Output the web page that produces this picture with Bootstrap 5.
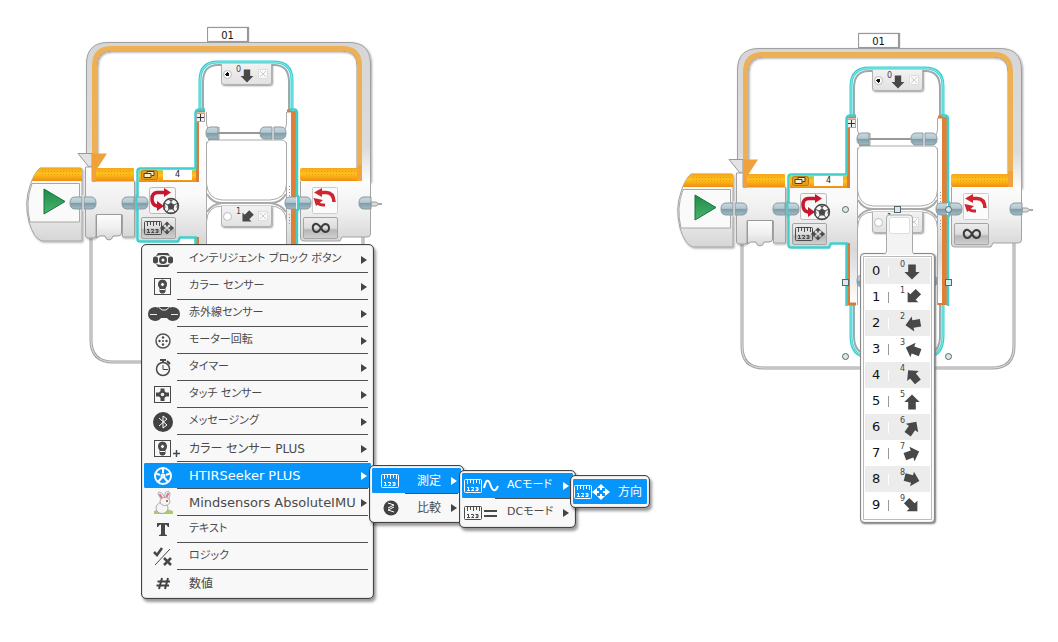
<!DOCTYPE html>
<html lang="ja">
<head>
<meta charset="utf-8">
<meta name="viewport" content="width=device-width, initial-scale=1">
<title>HTIRSeeker PLUS</title>
<link href="https://cdn.jsdelivr.net/npm/bootstrap@5.3.0/dist/css/bootstrap.min.css" rel="stylesheet">
<style>
  body { background: #fff; color: #4a4a4a; font-family: "DejaVu Sans", "Noto Sans CJK JP", sans-serif; font-size: 12px; }
  .workspace { display: grid; grid-template-columns: 8fr 5fr; min-height: 100vh; overflow: hidden; }
  .board { position: relative; }
  .board-low { top: 6px; }
  .board > svg { display: block; width: 407px; height: 380px; overflow: visible; }
  .pin { position: absolute; }
  .board button { font: inherit; color: inherit; }

  .loop-name { left: 207px; top: 27px; width: 41px; height: 15px; border: 1px solid #999; background: #fff; text-align: center; font-size: 10px; line-height: 12px; color: #111; padding: 2px 0 0; box-shadow: 1px 0 1px #999, inset 0 0 1px #aaa; }
  .port { left: 163px; top: 170px; width: 29px; height: 10px; border: 0; background: #fff; text-align: center; font-size: 8px; line-height: 10px; padding: 0; color: #222; }
  .case-tab { left: 221px; width: 51px; height: 21px; border: 1px solid #b2b2b2; border-top: 0; background: linear-gradient(#f2f2f2, #e2e2e2); box-shadow: 1px 1px 2px #999; border-radius: 0 0 3px 3px; padding: 0 3px 0 1px; }
  .case-one { top: 64px; }
  .case-two { top: 206px; }
  .case-tab input { appearance: none; width: 9px; height: 9px; margin: 0; border: 1px solid #bbb; border-radius: 50%; background: #fff; }
  .case-tab input:checked { background: radial-gradient(#111 0 2px, #fff 2px); }
  .case-tab svg { width: 21px; height: 20px; }
  .btn-x { width: 10px; height: 10px; border: 1px solid #ddd; background: #fafafa; padding: 0; line-height: 0; }
  .case-tab .btn-x svg { width: 8px; height: 8px; display: block; }
  .mode { width: 35px; height: 22px; padding: 0; border: 1px solid #a5a5a5; border-radius: 2px; background: linear-gradient(#ececec, #dcdcdc 50%, #b7b7b7 60%, #cfcfcf); line-height: 0; }
  .mode svg { width: 33px; height: 20px; display: block; }
  .mode-switch { left: 141px; top: 217px; }
  .mode-loop { left: 303px; top: 217px; }
  .expand { left: 196px; top: 113px; width: 9px; height: 9px; padding: 0; border: 1px solid #aaa; background: #eee; line-height: 0; }
  .expand svg { width: 7px; height: 7px; display: block; }

  .flyout { position: absolute; background: #f8f8f8; border: 1px solid #444; border-radius: 5px; box-shadow: inset 0 0 1px #444, 2px 3px 3px rgba(0,0,0,.4); padding: 1px 2px; font-feature-settings: "palt"; }
  .entry { position: relative; display: flex; align-items: center; width: 100%; height: 27px; padding: 0 4px 0 0; border: 0; background: none; text-align: left; white-space: nowrap; line-height: 20px; }
  .entry > svg { flex: none; width: 38px; height: 24px; }
  .entry > span { flex: 1; padding-left: 7px; }
  .entry > .kana { font-size: 11px; }
  .entry > .latin { font-size: 13px; }
  .entry::after { content: ""; position: absolute; left: 33px; right: 3px; bottom: 0; border-bottom: 1px solid #505050; }
  .entry:last-child::after { display: none; }
  .entry.more::before { content: ""; order: 3; border: solid transparent; border-width: 4px 0 4px 6px; border-left-color: #444; }
  .board .entry.chosen { color: #fff; }
  .entry.chosen { background: linear-gradient(#0795fb, #0795fb) 0 1px / 100% 25px no-repeat; border-radius: 3px; }
  .entry.chosen.more::before { border-left-color: #fff; }
  .menu-main { left: 141px; top: 244px; width: 233px; }
  .menu-measure { left: 369px; top: 465px; width: 95px; }
  .menu-wave { left: 459px; top: 470px; width: 117px; }
  .menu-direction { left: 570px; top: 475px; width: 80px; padding: 2px; }

  .picker { left: 209px; top: 247px; width: 75px; padding: 4px; border: 1px solid #888; border-radius: 4px; background: #fff; box-shadow: 1px 1px 2px #777, inset 0 0 1px #888, inset 0 0 0 2px #fff, inset 0 0 0 3px #bbb; }
  .picker button { width: 100%; height: 26px; display: flex; align-items: center; border: 0; padding: 0 0 0 7px; background: #fff; font-size: 13px; color: #111; }
  .picker button:nth-child(odd) { background: #ececec; }
  .picker button > i { width: 1px; height: 11px; margin: 0 7px 0 8px; background: #999; }
  .picker button:nth-child(odd) > i { background: #fff; }
  .picker svg { width: 28px; height: 24px; }
</style>
</head>
<body>
<svg width="0" height="0" class="position-absolute" aria-hidden="true">
  <defs>
    <linearGradient id="gold" x2="0" y2="1"><stop offset="0" stop-color="#f5a51c"/><stop offset=".45" stop-color="#ffc21a"/><stop offset="1" stop-color="#f08c14"/></linearGradient>
    <linearGradient id="shell" x2="0" y2="1"><stop offset="0" stop-color="#fdfdfd"/><stop offset=".5" stop-color="#f0f0f0"/><stop offset="1" stop-color="#d6d6d6"/></linearGradient>
    <linearGradient id="wall" gradientUnits="userSpaceOnUse" x1="0" y1="110" x2="0" y2="299"><stop offset="0" stop-color="#fff"/><stop offset=".45" stop-color="#fafafa"/><stop offset=".7" stop-color="#d8d8d8"/><stop offset="1" stop-color="#fff"/></linearGradient>
    <linearGradient id="band" gradientUnits="userSpaceOnUse" x1="0" y1="42" x2="0" y2="182"><stop offset="0" stop-color="#d6d6d6"/><stop offset=".75" stop-color="#dcdcdc"/><stop offset="1" stop-color="#fcfcfc"/></linearGradient>
    <linearGradient id="steel" x2="0" y2="1"><stop offset="0" stop-color="#c8d9e0"/><stop offset=".45" stop-color="#b4c8d0"/><stop offset=".5" stop-color="#7e9ba7"/><stop offset="1" stop-color="#a3bac3"/></linearGradient>
    <linearGradient id="leaf" x2="0" y2="1"><stop offset="0" stop-color="#1d8c48"/><stop offset="1" stop-color="#4bb36c"/></linearGradient>
    <pattern id="studs" width="3" height="3" patternUnits="userSpaceOnUse"><rect width="1" height="1" fill="#e99a10"/></pattern>
    <filter id="drop" x="-10%" y="-10%" width="125%" height="125%"><feDropShadow dx="1" dy="1" stdDeviation="1" flood-opacity=".35"/></filter>

    <g id="plug-l"><path d="M12 0H5Q0 0 0 6T5 12H12Z" fill="url(#steel)" stroke="#89999f"/></g>
    <g id="plug-r"><path d="M0 0H7Q12 0 12 6T7 12H0Z" fill="url(#steel)" stroke="#89999f"/></g>
    <path id="arrow" d="M-4-8H4V0H8L0 8L-8 0H-4Z" fill="#484848"/>
    <g id="ruler" fill="none" stroke="currentColor"><rect x=".5" y=".5" width="17" height="13" rx="1"/><path d="M3.500 1V5M6.500 1V4M9.500 1V5M12.500 1V4M15.500 1V5M4.500 8V12M3 8.500H4.500M3 11.500H6M7 8.500H9.500V10L7.500 11.500H10M11.500 8.500H14V11.500H11.500M12 10H14"/></g>
    <g id="move" stroke="currentColor" fill="currentColor"><path d="M-6 0H-2M2 0H6M0-6V-2M0 2V6" stroke-width="2"/><path d="M-9 0L-4-4V4ZM9 0L4-4V4ZM0-8L-4-4H4ZM0 8L-4 4H4Z" stroke="none"/></g>
    <g id="ball" fill="none" stroke="currentColor"><circle r="7.500" fill="#f4f4f4" stroke-width="1.400"/><path d="M0-3L3-1L2 3H-2L-3-1Z" fill="currentColor"/><path d="M0-3V-7M3-1L7-3M2 3L4.500 6.500M-2 3L-4.500 6.500M-3-1L-7-3"/><path d="M-3-7L0-5L3-7M7-3L6 1L7 4M-7-3L-6 1L-7 4M-3 7H3"/></g>
    <g id="bulb" fill="none" stroke="currentColor"><rect x="8.500" y="3.500" width="16" height="16"/><path d="M12.500 9Q12.500 5 16.500 5T20.500 9Q20.500 12 19 13V17L17.500 18H15.500L14 17V13Q12.500 12 12.500 9Z" fill="currentColor"/><circle cx="16.500" cy="9.500" r="2" fill="#f8f8f8"/><path d="M14 14.500H19" stroke="#f8f8f8"/></g>

    <g id="program">
      <!-- loop frame -->
      <path d="M91 238V340Q91 362 113 362H341Q363 362 363 340V236" fill="none" stroke="#a2a2a2" stroke-width="3"/>
      <path d="M91 238V340Q91 362 113 362H341Q363 362 363 340V236" fill="none" stroke="#e4e4e4"/>
      <path d="M86.500 154V64Q86.500 42.500 108 42.500H349Q370.500 42.500 370.500 64V182H357V66Q357 51 342 51H112Q97 51 97 66V154Z" fill="url(#band)" stroke="#a0a0a0" filter="url(#drop)"/>
      <path d="M94.500 176V66Q94.500 48.500 112 48.500H342Q359.500 48.500 359.500 66V176" fill="none" stroke="#edb055" stroke-width="5"/>
      <path d="M78 153.500H92V167H89Z" fill="#e2e2e2" stroke="#999"/>
      <path d="M92 153.500H107L97 169H92Z" fill="#efa23c"/>

      <!-- start block -->
      <path d="M40 168H80Q82 168 82 170V241H42Q34 239 29 222Q24 202 30 186Q34 173 40 168Z" fill="url(#shell)" stroke="#a3a3a3" filter="url(#drop)"/>
      <path d="M41 168H82V181H32Q35 171 41 168Z" fill="url(#gold)"/><rect x="40" y="170" width="39" height="7" fill="url(#studs)"/>
      <path d="M32 183.500H79.500V222H30Q25 202 32 183.500Z" fill="#fafafa" stroke="#a8a8a8"/>
      <path d="M44 189L65 201.500L44 214Z" fill="url(#leaf)" stroke="#16743a"/>
      <!-- loop entry -->
      <path d="M85.500 167H92V181H134.500V237H122.500V215H96V236L94 238H87L85.500 236Z" fill="url(#shell)" stroke="#a3a3a3" filter="url(#drop)"/>
      <rect x="94" y="168" width="40" height="13" rx="1" fill="url(#gold)"/><rect x="97" y="170" width="34" height="7" fill="url(#studs)"/>
      <path d="M92 165V182H96V165Z" fill="#f0a13b"/>
      <path d="M96.500 214.500H121.500V233Q121.500 236 118 236H113Q112 240 109 240T105 236H100L96.500 238Z" fill="url(#shell)" stroke="#999"/>

      <!-- switch: both case lanes -->
      <path d="M200 112V80Q200 62 218 62H274Q292 62 292 80V112V330Q292 351 274 351H218Q200 351 200 330Z" fill="#fff" stroke="#39cfd2" stroke-width="3"/>
      <path d="M200 112V80Q200 62 218 62H274Q292 62 292 80V112M292 299V330Q292 351 274 351H218Q200 351 200 330V299" fill="none" stroke="#8ce9e8"/>
      <path d="M203 112V82Q203 65 218 65H274Q289 65 289 82V112M203 296V330Q203 348 218 348H274Q289 348 289 330V296" fill="none" stroke="#9aabad" stroke-width="2"/>
      <path d="M139 181H197V112Q198 110 201 110H204Q206 110 206.500 114V299H197V237H180L178 241H139Z" fill="url(#wall)"/>
      <path d="M287 299V113Q287 110 291 110H294Q297 110 297 113V299Z" fill="url(#wall)"/>
      <path d="M206.500 112V124Q207 129 211 133M206.500 299V142M286.500 299V142M286.500 112V124Q286 129 283 131" stroke="#aaa" fill="none"/>
      <rect x="139" y="170" width="59" height="12" fill="url(#gold)"/>
      <path d="M197.500 122V182M197.500 237V298H205M197 112.500Q197 111 200 111H205M287 111H292" fill="none" stroke="#d97c36" stroke-width="3"/>
      <rect x="291" y="111" width="5" height="188" fill="#df8036"/><path d="M287 298H296" stroke="#d97c36" stroke-width="2"/>
      <path d="M289.500 186V196M289.500 214V224" stroke="#999" stroke-dasharray="1 2"/>
      <path d="M205 109.500H199Q195.500 110 195.500 113V168.500H140Q137.500 168.500 137.500 171V239Q137.500 241.500 140 241.500H178L180 237.500H195.500V300M290 109.500H294Q297 109.500 297 113V300" fill="none" stroke="#3fd0cd" stroke-width="2.500"/>
      <path d="M139 170.500H195" stroke="#9edb75"/>
      <rect x="141.500" y="170.500" width="16" height="9" rx="2" fill="#e8a016" stroke="#b97b14"/>
      <path d="M144 173.500H151V177.500H144ZM147 173V171.500H154V175.500H151.500" fill="#f6ecce" stroke="#4f3c14"/>
      <rect x="149.500" y="187.500" width="26" height="26" rx="2" fill="#f7f7f7" stroke="#bbb"/>
      <path d="M165 192.500H157Q152 193 152 199T157 206H160" fill="none" stroke="#c7172e" stroke-width="3.500"/><path d="M164 188L171 192.500L164 197ZM157 201L164 206L157 211Z" fill="#c7172e"/>
      <use href="#ball" transform="translate(171 206)" color="#484848"/>

      <!-- wires between cases -->
      <path d="M218 133H262" stroke="#999" stroke-width="2"/>
      <path d="M206.500 299V222Q207 206 222 206H270Q286 206 286.500 222V299" fill="#fff" stroke="#aaa"/>
      <path d="M206.500 145Q207 140 211 140H281Q286.500 140 286.500 145V184Q286 199 270 200H222Q208 199 206.500 184Z" fill="#fff" stroke="#aaa"/>
      <path d="M207 194Q212 203 222 203H270Q281 203 286 194M207 212Q212 204 222 203M286 212Q281 204 270 203" fill="none" stroke="#aaa" stroke-width="2"/>
      <use href="#plug-l" x="206" y="127"/><path d="M208 139.500H219V127" stroke="#999" fill="none"/>
      <use href="#plug-l" x="260" y="127"/><use href="#plug-r" x="274" y="127"/>
      <use href="#plug-l" x="206" y="269"/><use href="#plug-r" x="274" y="269"/>

      <!-- loop end -->
      <path d="M300.500 181H370.500V234Q370.500 237 367 237H342L340 241H304Q300.500 241 300.500 238Z" fill="url(#shell)"/>
      <path d="M370.500 176V234Q370.500 237 367 237H342L340 241H304Q300.500 241 300.500 238V181" fill="none" stroke="#a3a3a3"/>
      <rect x="300" y="168" width="61" height="13" rx="2" fill="url(#gold)"/><rect x="304" y="170" width="54" height="7" fill="url(#studs)"/><path d="M357 165H362V181H357Z" fill="#f1a33a"/>
      <rect x="312.500" y="187.500" width="25" height="26" rx="1" fill="#fbfbfb" stroke="#ccc"/>
      <path d="M321 192.500H326Q333.500 192.500 334 202" fill="none" stroke="#d02531" stroke-width="3.500"/><path d="M314 192.500L322 188V197ZM313.500 198L323 200L316 206Z" fill="#d02531"/><path d="M317 202Q319 205.500 325 205" fill="none" stroke="#d02531" stroke-width="3"/>

      <use href="#plug-l" x="70" y="197"/><use href="#plug-r" x="84" y="197"/>
      <use href="#plug-l" x="122" y="197"/><use href="#plug-r" x="136" y="197"/>
      <use href="#plug-l" x="285" y="197"/><use href="#plug-r" x="299" y="197"/>
      <path d="M136.500 195V211M298 195V211" stroke="#3fd0cd" stroke-width="2"/><path d="M83 195V211M296.500 197V209" stroke="#e7eef0"/>
      <path d="M371 202H376L379 204L376 206H371Z" fill="#ddd" stroke="#999"/><path d="M378 204H382" stroke="#aaa" stroke-width="2"/>
      <use href="#plug-l" x="359" y="197"/>
    </g>
  </defs>
</svg>

<template id="controls">
  <input class="pin loop-name" type="text" value="01" aria-label="ループ">
  <input class="pin port" type="text" value="4" aria-label="ポート">
  <button class="pin expand" type="button" aria-label="+"><svg viewBox="0 0 7 7"><path d="M0 3.500H7M3.500 0V7" stroke="#333"/></svg></button>
  <div class="pin case-tab case-one d-flex align-items-center justify-content-between">
    <input type="radio" checked aria-label="0"><svg viewBox="0 0 21 20"><text x="1" y="8" font-size="8" fill="#444">0</text><use href="#arrow" transform="translate(12 12) scale(.8)"/></svg><button class="btn-x" type="button" aria-label="×"><svg viewBox="0 0 8 8"><path d="M1 1L7 7M7 1L1 7" stroke="#ccc"/></svg></button>
  </div>
  <div class="pin case-tab case-two d-flex align-items-center justify-content-between">
    <input type="radio" aria-label="1"><svg viewBox="0 0 21 20"><text x="1" y="8" font-size="8" fill="#444">1</text><use href="#arrow" transform="translate(12 11) rotate(45) scale(.8)"/></svg><button class="btn-x" type="button" aria-label="×"><svg viewBox="0 0 8 8"><path d="M1 1L7 7M7 1L1 7" stroke="#ccc"/></svg></button>
  </div>
  <button class="pin mode mode-switch" type="button" aria-label="測定"><svg viewBox="0 0 33 20"><use href="#ruler" x="2" y="3"/><use href="#move" transform="translate(25 10) scale(.8)"/></svg></button>
  <button class="pin mode mode-loop" type="button" aria-label="無限"><svg viewBox="0 0 33 20"><path d="M17 10Q13.500 5 11 6Q8 7.500 9 11Q10 14.500 13 14Q15 13.500 17 10Q19 6 21.500 6Q25 6.500 25 10T21.500 14Q19 14 17 10" fill="none" stroke="#3c3c3c" stroke-width="2"/></svg></button>
</template>

<main class="workspace">
  <section class="board">
    <svg viewBox="0 0 407 380" aria-hidden="true"><use href="#program"/></svg>

    <nav class="flyout menu-main">
      <button class="entry more" type="button"><svg viewBox="0 0 38 24"><g fill="#484848"><path d="M14 5H24L26 8Q19 6 12 8ZM14 19H24L26 16Q19 18 12 16Z"/><rect x="9" y="8.500" width="5" height="7" rx="2"/><rect x="24" y="8.500" width="5" height="7" rx="2"/><circle cx="19" cy="12" r="4"/></g><circle cx="19" cy="12" r="1.500" fill="#fff"/></svg><span class="kana">インテリジェント ブロック ボタン</span></button>
      <button class="entry more" type="button"><svg viewBox="0 0 38 24"><use href="#bulb" x="2"/></svg><span class="kana">カラー センサー</span></button>
      <button class="entry more" type="button"><svg viewBox="0 0 38 24"><path d="M11 5Q15 5 17 9L22 9Q25 5 29 5Q36 6 36 12T29 19Q25 19 23 16H17Q15 19 11 19Q4 18 4 12T11 5ZM14 5H26L23 9H17Z" fill="#484848"/><path d="M6 12.500H13M27 12.500H34M15 5.500L18 8H22L25 5.500" stroke="#eee" fill="none"/></svg><span class="kana">赤外線センサー</span></button>
      <button class="entry more" type="button"><svg viewBox="0 0 38 24"><circle cx="19" cy="12" r="7" fill="none" stroke="#555" stroke-width="1.500"/><g fill="#484848"><circle cx="19" cy="12" r="1"/><circle cx="19" cy="8.500" r="1.200"/><circle cx="19" cy="15.500" r="1.200"/><circle cx="15.500" cy="12" r="1.200"/><circle cx="22.500" cy="12" r="1.200"/></g></svg><span class="kana">モーター回転</span></button>
      <button class="entry more" type="button"><svg viewBox="0 0 38 24"><circle cx="19" cy="13" r="6.500" fill="none" stroke="#484848" stroke-width="1.500"/><path d="M16 4H22M19 4V6M23 5L26 8" stroke="#484848" stroke-width="2" fill="none"/><path d="M19 9V13.500H24" stroke="#484848" fill="none"/></svg><span class="kana">タイマー</span></button>
      <button class="entry more" type="button"><svg viewBox="0 0 38 24"><rect x="10.500" y="3.500" width="16" height="16" fill="none" stroke="#484848"/><path d="M16.500 5.500H20.500V8L22 9.500H25V13.500H22L20.500 15V18H16.500V15L15 13.500H12V9.500H15L16.500 8Z" fill="#484848"/><circle cx="18.500" cy="11.500" r="1.800" fill="#eee"/></svg><span class="kana">タッチ センサー</span></button>
      <button class="entry more" type="button"><svg viewBox="0 0 38 24"><circle cx="19" cy="12" r="10" fill="#424242"/><path d="M15 8L23 15L19 18V6L23 9L15 16" fill="none" stroke="#fff"/></svg><span class="kana">メッセージング</span></button>
      <button class="entry more" type="button"><svg viewBox="0 0 38 24"><use href="#bulb" x="2"/><path d="M29 16.500H36M32.500 13V20" stroke="#484848" stroke-width="1.500"/></svg><span>カラー センサー PLUS</span></button>
      <button class="entry more chosen" type="button"><svg viewBox="0 0 38 24"><g fill="none" stroke="#fff" stroke-width="2"><circle cx="19" cy="12" r="8"/><circle cx="19" cy="12" r="1.500"/><path d="M19 9V4M22 11L27 9M20.500 14L24 18M17.500 14L14 18M16 11L11 9"/></g></svg><span class="latin">HTIRSeeker PLUS</span></button>
      <button class="entry more" type="button"><svg viewBox="0 0 38 24"><path d="M10 20Q19 16 29 20V23H10Z" fill="#a9cc65"/><g fill="#f7f5f4" stroke="#999" stroke-width=".8"><ellipse cx="18" cy="17" rx="6" ry="5.500"/><path d="M18 9Q12 2 15 1Q19 1 21 8M21 8Q20 0 24 0Q28 2 24 9"/><ellipse cx="21" cy="10.500" rx="5" ry="4"/></g><path d="M18 7L15.500 3M22.500 6L24.500 2" stroke="#df7386" stroke-width="2"/><circle cx="23" cy="10" r="1" fill="#a33"/></svg><span class="latin">Mindsensors AbsoluteIMU</span></button>
      <button class="entry" type="button"><svg viewBox="0 0 38 24"><path d="M13 5H25V9H24Q23 6.500 21 6.500V15.500Q21 17 23 17V18H15V17Q17 17 17 15.500V6.500Q15 6.500 14 9H13Z" fill="#484848"/></svg><span class="kana">テキスト</span></button>
      <button class="entry" type="button"><svg viewBox="0 0 38 24"><path d="M10 7L13 10L18 3M20 13L27 20M27 13L20 20" fill="none" stroke="#484848" stroke-width="2.500"/><path d="M11 20L26 4" stroke="#484848"/></svg><span class="kana">ロジック</span></button>
      <button class="entry" type="button"><svg viewBox="0 0 38 24"><path d="M18 6L15 17M24 6L21 17M13.500 9.500H26M12.500 13.500H25" stroke="#424242" stroke-width="2"/></svg><span>数値</span></button>
    </nav>

    <nav class="flyout menu-measure">
      <button class="entry more chosen" type="button"><svg viewBox="0 0 38 24"><use href="#ruler" x="9" y="5"/></svg><span>測定</span></button>
      <button class="entry more" type="button"><svg viewBox="0 0 38 24"><circle cx="19" cy="12" r="7.500" fill="#424242"/><path d="M16 7L22 9L16 12M22 11L16 14L22 16" fill="none" stroke="#fff"/></svg><span>比較</span></button>
    </nav>
    <nav class="flyout menu-wave">
      <button class="entry more chosen" type="button"><svg viewBox="0 0 38 24"><use href="#ruler" x="2" y="5"/><path d="M22 14Q25 1 28.500 11T36 12" fill="none" stroke="#fff" stroke-width="2"/></svg><span class="kana">ACモード</span></button>
      <button class="entry more" type="button"><svg viewBox="0 0 38 24"><use href="#ruler" x="2" y="5"/><path d="M22 10H35M22 15H35" stroke="#484848" stroke-width="2"/></svg><span class="kana">DCモード</span></button>
    </nav>
    <nav class="flyout menu-direction">
      <button class="entry chosen" type="button"><svg viewBox="0 0 38 24"><use href="#ruler" x="1" y="5"/><use href="#move" x="28" y="12"/></svg><span>方向</span></button>
    </nav>
  </section>

  <section class="board board-low">
    <svg viewBox="0 0 407 380" aria-hidden="true"><use href="#program"/></svg>
    <div class="pin picker">
      <button type="button">0<i></i><svg viewBox="0 0 28 24"><text x="4" y="8" font-size="8" fill="#444">0</text><use href="#arrow" transform="translate(16 13) scale(.95)"/></svg></button>
      <button type="button">1<i></i><svg viewBox="0 0 28 24"><text x="4" y="8" font-size="8" fill="#444">1</text><use href="#arrow" transform="translate(17 12) rotate(45) scale(.95)"/></svg></button>
      <button type="button">2<i></i><svg viewBox="0 0 28 24"><text x="4" y="8" font-size="8" fill="#444">2</text><use href="#arrow" transform="translate(17 13) rotate(80) scale(.95)"/></svg></button>
      <button type="button">3<i></i><svg viewBox="0 0 28 24"><text x="4" y="8" font-size="8" fill="#444">3</text><use href="#arrow" transform="translate(17 13) rotate(110) scale(.95)"/></svg></button>
      <button type="button">4<i></i><svg viewBox="0 0 28 24"><text x="4" y="8" font-size="8" fill="#444">4</text><use href="#arrow" transform="translate(17 13) rotate(140) scale(.95)"/></svg></button>
      <button type="button">5<i></i><svg viewBox="0 0 28 24"><text x="4" y="8" font-size="8" fill="#444">5</text><use href="#arrow" transform="translate(16 13) rotate(180) scale(.95)"/></svg></button>
      <button type="button">6<i></i><svg viewBox="0 0 28 24"><text x="4" y="8" font-size="8" fill="#444">6</text><use href="#arrow" transform="translate(16 13) rotate(215) scale(.95)"/></svg></button>
      <button type="button">7<i></i><svg viewBox="0 0 28 24"><text x="4" y="8" font-size="8" fill="#444">7</text><use href="#arrow" transform="translate(16 13) rotate(250) scale(.95)"/></svg></button>
      <button type="button">8<i></i><svg viewBox="0 0 28 24"><text x="4" y="8" font-size="8" fill="#444">8</text><use href="#arrow" transform="translate(16 12) rotate(285) scale(.95)"/></svg></button>
      <button type="button">9<i></i><svg viewBox="0 0 28 24"><text x="4" y="8" font-size="8" fill="#444">9</text><use href="#arrow" transform="translate(16 13) rotate(315) scale(.95)"/></svg></button>
    </div>
    <svg class="pin top-0 start-0 pe-none" viewBox="0 0 407 380" aria-hidden="true">
      <path d="M234 248L235.500 246V212Q235.500 209 238 209H258Q261 209 261 212V246L263 248Z" fill="#f3f3f3"/>
      <path d="M232 248Q235.500 248 235.500 245V212Q235.500 209 238 209H258Q261.500 209 261.500 212V245Q261.500 248 264 248" fill="none" stroke="#aaa"/>
      <rect x="238.500" y="211.500" width="20" height="16" rx="2" fill="#fff" stroke="#ddd"/>
      <g fill="#d9e8ea" stroke="#56686b"><circle cx="194.500" cy="203.500" r="3"/><circle cx="297.500" cy="203.500" r="3"/><circle cx="194.500" cy="350.500" r="3"/><circle cx="297.500" cy="350.500" r="3"/><rect x="243.500" y="200.500" width="6" height="6"/><rect x="191.500" y="273.500" width="6" height="6"/><rect x="294.500" y="273.500" width="6" height="6"/></g>
    </svg>
  </section>
</main>
<script src="https://cdn.jsdelivr.net/npm/bootstrap@5.3.0/dist/js/bootstrap.bundle.min.js"></script>
<script>
  document.querySelectorAll('.board').forEach((board, n) => {
    const parts = document.getElementById('controls').content.cloneNode(true);
    parts.querySelectorAll('[type=radio]').forEach(r => r.name = 'case' + n);
    board.querySelector('svg').after(parts);
  });
</script>
</body>
</html>
